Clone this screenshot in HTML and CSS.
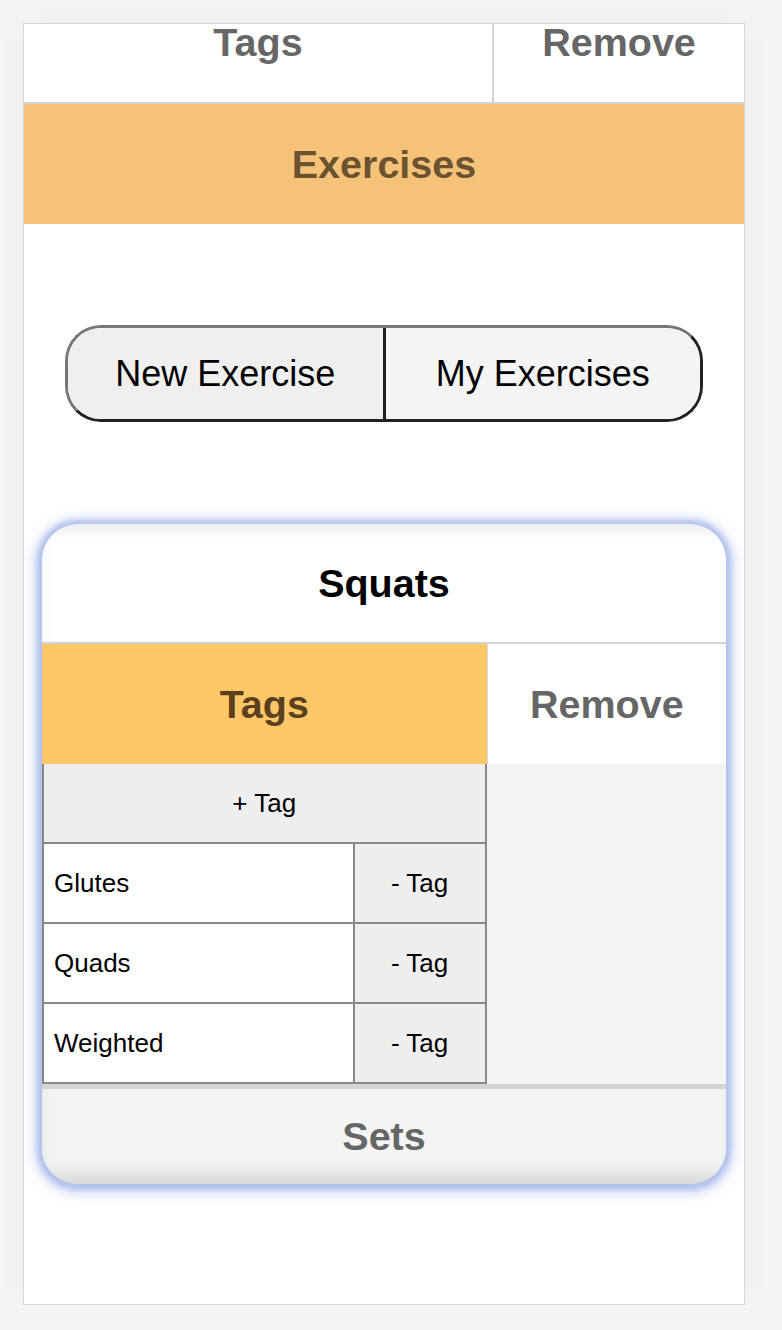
FILE: index.html
```html
<!DOCTYPE html>
<html lang="en">
<head>
<meta charset="utf-8">
<title>Exercises</title>
<link rel="stylesheet" href="styles.css">
</head>
<body>
<div class="frame">
  <div class="nav-tabs">
    <div class="nav-tab">Tags</div>
    <div class="nav-tab nav-tab-remove">Remove</div>
  </div>
  <div class="section-bar">Exercises</div>
  <div class="segmented">
    <button class="seg seg-left">New Exercise</button>
    <button class="seg seg-right">My Exercises</button>
  </div>
  <div class="card">
    <div class="card-title">Squats</div>
    <div class="card-tabs">
      <div class="card-tab card-tab-active">Tags</div>
      <div class="card-tab card-tab-remove">Remove</div>
    </div>
    <div class="card-body">
      <div class="tag-list">
        <div class="tag-add">+ Tag</div>
        <div class="tag-row">
          <div class="tag-name">Glutes</div>
          <div class="tag-remove">- Tag</div>
        </div>
        <div class="tag-row">
          <div class="tag-name">Quads</div>
          <div class="tag-remove">- Tag</div>
        </div>
        <div class="tag-row">
          <div class="tag-name">Weighted</div>
          <div class="tag-remove">- Tag</div>
        </div>
      </div>
      <div class="card-side"></div>
    </div>
    <div class="card-sets">Sets</div>
  </div>
</div>
</body>
</html>
```

FILE: styles.css
```css
html, body {
  margin: 0;
}

body {
  padding: 23px 0 0 23px;
  background: #f5f5f5;
  font-family: "Liberation Sans", Arial, Helvetica, sans-serif;
}

.frame {
  width: 720px;
  height: 1280px;
  border: 1px solid #d6d6d6;
  background: #fff;
  box-shadow: 0 0 24px rgba(0, 0, 0, 0.05);
}

.nav-tabs {
  display: flex;
  height: 78px;
  border-bottom: 2px solid #d4d4d4;
}

.nav-tab {
  width: 65%;
  display: flex;
  align-items: flex-start;
  justify-content: center;
  font-size: 39.5px;
  line-height: 36px;
  font-weight: bold;
  color: #666;
}

.nav-tab-remove {
  width: auto;
  flex: 1;
  border-left: 2px solid #d4d4d4;
}

.section-bar {
  height: 120px;
  display: flex;
  align-items: center;
  justify-content: center;
  background: #f5c277;
  color: #6b5332;
  font-size: 39.5px;
  font-weight: bold;
}

.segmented {
  display: flex;
  box-sizing: border-box;
  height: 97px;
  margin: 101px 41px 0;
  border: 3px solid;
  border-color: #777 #222 #222 #777;
  border-radius: 36px;
  overflow: hidden;
}

.seg {
  flex: 1;
  margin: 0;
  padding: 0;
  border: none;
  font-family: inherit;
  font-size: 36px;
  color: #000;
  background: #efefef;
}

.seg-left {
  border-right: 3px solid #222;
}

.seg-right {
  background: #f4f4f4;
}

.card {
  margin: 102px 18px 0;
  border-radius: 36px;
  overflow: hidden;
  background: #fff;
  box-shadow: 0 1px 5px 5px rgba(170, 188, 236, 0.8), 0 2px 14px 7px rgba(150, 170, 232, 0.45);
}

.card-title {
  height: 118px;
  display: flex;
  align-items: center;
  justify-content: center;
  border-bottom: 2px solid #d4d4d4;
  font-size: 39.5px;
  font-weight: bold;
  color: #000;
  box-shadow: inset 0 14px 18px -10px rgba(0, 0, 0, 0.1), inset 14px 0 16px -12px rgba(0, 0, 0, 0.04);
}

.card-tabs {
  display: flex;
  height: 120px;
}

.card-tab {
  display: flex;
  align-items: center;
  justify-content: center;
  font-size: 39.5px;
  font-weight: bold;
}

.card-tab-active {
  width: 65%;
  background: #fec868;
  color: #5c3f1d;
}

.card-tab-remove {
  flex: 1;
  background: #fff;
  color: #666;
  border-left: 1px solid #d8d8d8;
}

.card-body {
  display: flex;
}

.tag-list {
  width: 65%;
  box-sizing: border-box;
  border: 2px solid #888;
  border-top: none;
  font-size: 26px;
  color: #000;
}

.tag-add {
  height: 78px;
  display: flex;
  align-items: center;
  justify-content: center;
  background: #eee;
  border-bottom: 2px solid #888;
}

.tag-row {
  display: grid;
  grid-template-columns: 1fr 130px;
  height: 78px;
  border-bottom: 2px solid #888;
}

.tag-row:last-child {
  border-bottom: none;
}

.tag-name {
  display: flex;
  align-items: center;
  padding-left: 10px;
  background: #fff;
  border-right: 2px solid #888;
}

.tag-remove {
  display: flex;
  align-items: center;
  justify-content: center;
  background: #eee;
}

.card-side {
  flex: 1;
  background: #f4f4f4;
}

.card-sets {
  height: 95px;
  display: flex;
  align-items: center;
  justify-content: center;
  border-top: 5px solid #d4d4d4;
  background: #f4f4f4;
  font-size: 39.5px;
  font-weight: bold;
  color: #666;
  box-shadow: inset 0 -18px 18px -10px rgba(0, 0, 0, 0.14), inset 14px 0 16px -12px rgba(0, 0, 0, 0.04);
}
```
